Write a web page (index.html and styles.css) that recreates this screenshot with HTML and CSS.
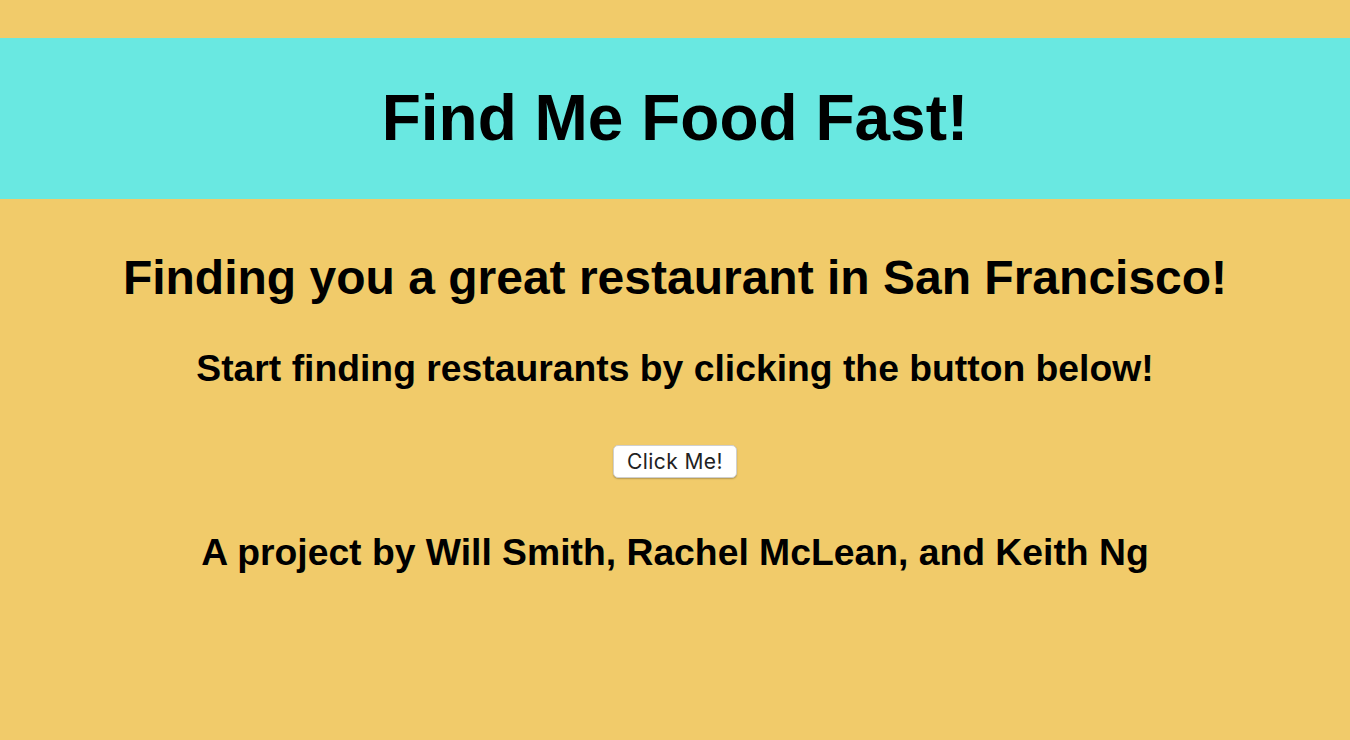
FILE: index.html
```html
<!DOCTYPE html>
<html lang="en">
<head>
<meta charset="utf-8">
<title>Find Me Food Fast!</title>
<link rel="stylesheet" href="styles.css">
</head>
<body>
  <header class="banner">
    <h1 class="banner-title">Find Me Food Fast!</h1>
  </header>
  <main class="content">
    <h2 class="tagline">Finding you a great restaurant in San Francisco!</h2>
    <h3 class="prompt">Start finding restaurants by clicking the button below!</h3>
    <button class="click-btn" type="button">Click Me!</button>
    <h3 class="credits">A project by Will Smith, Rachel McLean, and Keith Ng</h3>
  </main>
</body>
</html>
```

FILE: styles.css
```css
html, body {
  margin: 0;
  padding: 0;
}

body {
  background: #f1cb6a;
  font-family: "Liberation Sans", Arial, Helvetica, sans-serif;
  color: #000;
  min-height: 740px;
  padding-top: 38px;
  box-sizing: border-box;
}

.banner {
  background: #69e8e1;
  height: 161px;
  display: flex;
  align-items: center;
  justify-content: center;
}

.banner-title {
  margin: 0;
  font-size: 64px;
  line-height: 64px;
  font-weight: 700;
  position: relative;
  top: -1px;
}

.content {
  display: flex;
  flex-direction: column;
  align-items: center;
  text-align: center;
  padding-top: 51px;
}

.tagline {
  margin: 0;
  font-size: 48px;
  line-height: 56px;
  font-weight: 700;
}

.prompt {
  margin: 40px 0 0;
  font-size: 37.3px;
  line-height: 44px;
  font-weight: 700;
}

.click-btn {
  margin-top: 55px;
  height: 33px;
  box-sizing: border-box;
  padding: 0 13px;
  background: #fff;
  border: 1px solid #cfcfcf;
  border-radius: 5px;
  box-shadow: 0 1px 1.5px rgba(0, 0, 0, 0.25);
  font-family: Inter, "Noto Sans", sans-serif;
  font-size: 21px;
  letter-spacing: 0.4px;
  color: #222;
  cursor: pointer;
}

.credits {
  margin: 52px 0 0;
  font-size: 37.3px;
  line-height: 44px;
  font-weight: 700;
}
```
